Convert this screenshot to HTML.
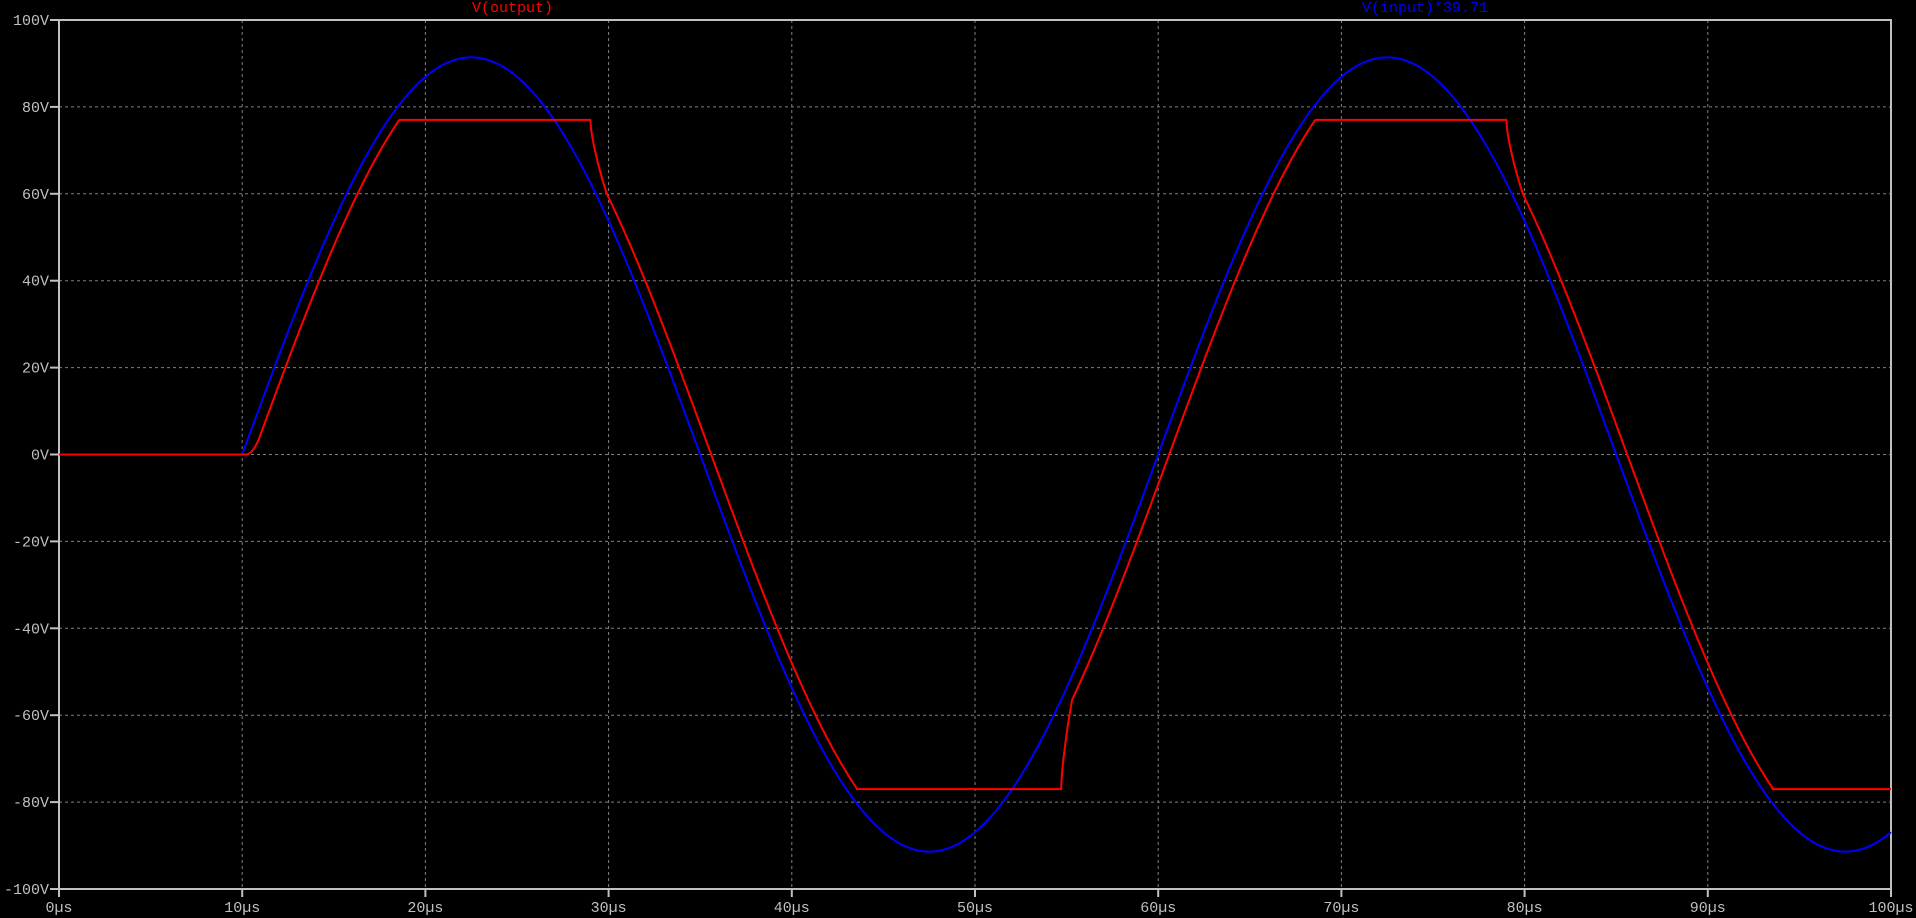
<!DOCTYPE html>
<html><head><meta charset="utf-8"><style>
html,body{margin:0;padding:0;background:#000;width:1916px;height:918px;overflow:hidden}
svg{display:block}
text{font-family:"Liberation Mono",monospace;font-size:15px}
</style></head><body>
<svg id="s" width="1916" height="918" xmlns="http://www.w3.org/2000/svg">
<g id="grid" stroke="#808080" stroke-width="1" stroke-dasharray="3,3"></g>
<rect x="59" y="20" width="1832" height="869" fill="none" stroke="#c0c0c0" stroke-width="2"/>
<g id="ticks" stroke="#c0c0c0" stroke-width="2"></g>
<g id="labels" fill="#c0c0c0"></g>
<polyline id="blue" fill="none" stroke="#0000ff" stroke-width="2"/>
<polyline id="red" fill="none" stroke="#ff0000" stroke-width="2"/>
<text x="472" y="12" fill="#ff0000">V(output)</text>
<text x="1362" y="12" fill="#0000ff">V(input)*39.71</text>
</svg>
<script>
var X0=59,W=1832,Y0=20,H=869;
function X(t){return X0+t/100*W}
function Y(v){return Y0+(100-v)/200*H}
var g=document.getElementById('grid'),tk=document.getElementById('ticks'),lb=document.getElementById('labels');
var ns='http://www.w3.org/2000/svg';
function el(p,n,a,txt){var e=document.createElementNS(ns,n);for(var k in a)e.setAttribute(k,a[k]);if(txt)e.textContent=txt;p.appendChild(e);}
for(var v=-100;v<=100;v+=20){var y=Y(v);
 if(v>-100&&v<100)el(g,'line',{x1:X0,x2:X0+W,y1:y,y2:y});
 el(tk,'line',{x1:50,x2:59,y1:y,y2:y});
 el(lb,'text',{x:49,y:y+5,'text-anchor':'end'},v+'V');}
for(var t=0;t<=100;t+=10){var x=X(t);
 if(t>0&&t<100)el(g,'line',{x1:x,x2:x,y1:Y0,y2:Y0+H});
 el(tk,'line',{x1:x,x2:x,y1:889,y2:897});
 el(lb,'text',{x:x,y:912,'text-anchor':'middle'},t+'µs');}
var A=91.4;
function blue(t){return t<10?0:A*Math.sin(2*Math.PI*(t-10)/50)}
function sr(t){return t<10.6?0:A*Math.sin(2*Math.PI*(t-10.6)/50)}
var holds=[[18.7,29,77,0.9],[43.5,54.7,-77,0.6],[68.7,79,77,0.9],[93.5,101,-77,0.6]];
function red(t){
 if(t<10.2)return 0;
 if(t<10.9){var u=(t-10.2)/0.7;return u*u*sr(10.9)}
 for(var i=0;i<holds.length;i++){var h=holds[i];
  if(t>=h[0]&&t<=h[1])return h[2];
  if(t>h[1]&&t<h[1]+h[3]){var u=(t-h[1])/h[3];var tgt=sr(h[1]+h[3]);return h[2]+(tgt-h[2])*Math.pow(u,0.7);}
 }
 var v=sr(t);return Math.max(-77,Math.min(77,v));
}
var pb=[],pr=[];
for(var t=0;t<=100;t+=0.05){pb.push(X(t).toFixed(1)+','+Y(blue(t)).toFixed(1));pr.push(X(t).toFixed(1)+','+Y(red(t)).toFixed(1));}
document.getElementById('blue').setAttribute('points',pb.join(' '));
document.getElementById('red').setAttribute('points',pr.join(' '));
</script>
</body></html>
